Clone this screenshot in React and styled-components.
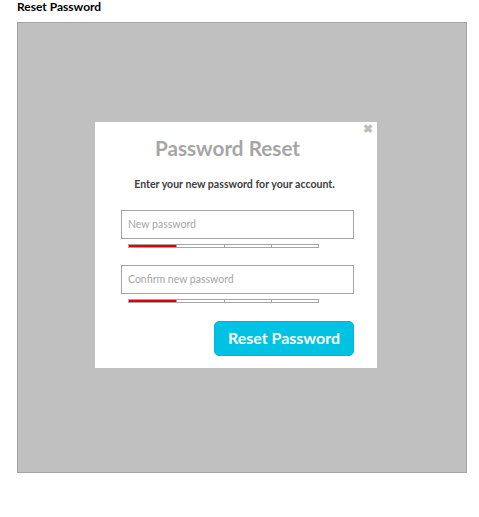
import React from "react";
import styled, { createGlobalStyle } from "styled-components";

const Global = createGlobalStyle`
  html, body { margin: 0; padding: 0; background: #fff; }
  body { font-family: Lato, "Open Sans", sans-serif; }
`;

const Page = styled.div`
  padding: 0 0 0 17px;
  width: 479px;
  box-sizing: border-box;
`;

const Heading = styled.div`
  font-size: 12px;
  font-weight: 700;
  color: #000;
  height: 22px;
  line-height: 14px;
`;

const Stage = styled.div`
  width: 450px;
  height: 451px;
  box-sizing: border-box;
  background: #c0c0c0;
  border: 1px solid #a3a3a3;
  padding: 99px 0 0 77px;
`;

const Dialog = styled.div`
  position: relative;
  width: 282px;
  height: 246px;
  background: #fff;
  box-sizing: border-box;
  padding: 14px 23px 0 26px;
  display: flex;
  flex-direction: column;
`;

const Close = styled.span`
  position: absolute;
  top: 1px;
  right: 4px;
  font-size: 12px;
  font-weight: 700;
  color: #bdbdbd;
  line-height: 12px;
`;

const Title = styled.h2`
  margin: 0;
  font-size: 20.7px;
  font-weight: 700;
  color: #a6a6a6;
  text-align: center;
  padding-right: 20px;
  line-height: 24px;
`;

const Subtitle = styled.p`
  margin: 18px 0 0;
  padding-right: 6px;
  font-size: 10.6px;
  font-weight: 700;
  color: #404040;
  text-align: center;
  line-height: 13px;
  white-space: nowrap;
`;

const Field = styled.div`
  display: flex;
  flex-direction: column;
  margin-top: ${(p) => p.$top}px;
`;

const Input = styled.input`
  width: 233px;
  height: 29px;
  box-sizing: border-box;
  border: 1px solid #a6a6a6;
  padding: 0 6px 1px;
  font-family: Lato, "Open Sans", sans-serif;
  font-size: 10.5px;
  color: #333;
  outline: none;
  &::placeholder { color: #a6a6a6; }
`;

const Meter = styled.div`
  margin: 5px 0 0 7px;
  width: 191px;
  height: 4px;
  display: grid;
  grid-template-columns: repeat(4, 1fr);
  box-sizing: border-box;
  border: 1px solid #a6a6a6;
`;

const Segment = styled.div`
  background: ${(p) => (p.$on ? "#e00000" : "#fff")};
  border-left: ${(p) => (p.$first ? "none" : "1px solid #a6a6a6")};
`;

const Actions = styled.div`
  display: flex;
  justify-content: flex-end;
  margin-top: 18px;
`;

const Button = styled.button`
  width: 140px;
  height: 35px;
  border: 1px solid #00b5d6;
  border-radius: 5px;
  background: #00c2e2;
  color: #fff;
  font-family: Lato, "Open Sans", sans-serif;
  font-size: 16px;
  font-weight: 700;
  cursor: pointer;
  padding: 0 0 2px;
`;

function Strength({ level }) {
  return (
    <Meter>
      {[0, 1, 2, 3].map((i) => (
        <Segment key={i} $on={i < level} $first={i === 0} />
      ))}
    </Meter>
  );
}

export default function App() {
  return (
    <>
      <Global />
      <Page>
        <Heading>Reset Password</Heading>
        <Stage>
          <Dialog>
            <Close>✖</Close>
            <Title>Password Reset</Title>
            <Subtitle>Enter your new password for your account.</Subtitle>
            <Field $top={19}>
              <Input type="password" placeholder="New password" />
              <Strength level={1} />
            </Field>
            <Field $top={17}>
              <Input type="password" placeholder="Confirm new password" />
              <Strength level={1} />
            </Field>
            <Actions>
              <Button>Reset Password</Button>
            </Actions>
          </Dialog>
        </Stage>
      </Page>
    </>
  );
}
